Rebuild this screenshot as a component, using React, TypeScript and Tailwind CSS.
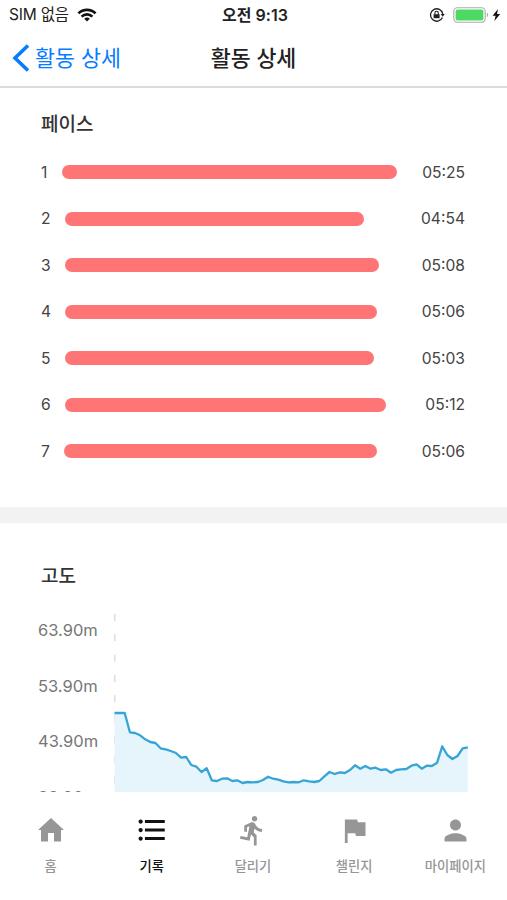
import { type FC, type ReactNode } from "react";
import { MdDirectionsRun, MdFormatListBulleted, MdPerson } from "react-icons/md";

interface Pace {
  km: number;
  time: string;
  gap: number;
  width: number;
}

const paces: Pace[] = [
  { km: 1, time: "05:25", gap: 0, width: 334.5 },
  { km: 2, time: "04:54", gap: 3, width: 299 },
  { km: 3, time: "05:08", gap: 3, width: 314 },
  { km: 4, time: "05:06", gap: 3, width: 312 },
  { km: 5, time: "05:03", gap: 3, width: 309 },
  { km: 6, time: "05:12", gap: 3, width: 320.5 },
  { km: 7, time: "05:06", gap: 2, width: 313 },
];

const labels = ["63.90m", "53.90m", "43.90m", "33.90m"];

const heights = [
  99, 99, 99, 118.3, 119, 121.3, 125.3, 128, 129, 134.3, 135.3, 137, 139, 143.7, 143, 151, 152.7, 158, 154.3, 166.3,
  167, 164.7, 164.3, 167, 166.3, 169, 168, 168.3, 168, 166, 162.7, 164.7, 165.7, 167.3, 168.3, 168, 168.3, 166.3,
  167.3, 168, 167, 162.3, 158, 160, 158.3, 159, 156, 151.3, 154.7, 152, 154.7, 153.7, 156, 155.3, 158.7, 156, 155.3,
  155, 151.7, 150.3, 154.7, 151.7, 152, 148.7, 132.3, 141, 145, 142, 134.3, 133.3,
];

const line = heights.map((y, i) => `${(0.5 + i * 5.12).toFixed(1)},${y}`).join(" ");

const StatusBar: FC = () => (
  <div className="grid h-[30px] grid-cols-3 items-center pl-[9px] pr-[6px] text-[#222]">
    <div className="flex items-center gap-2">
      <span className="whitespace-nowrap text-[15.5px] tracking-[-0.2px]">SIM 없음</span>
      <svg width="20" height="14" viewBox="0 0 20 14" fill="none" stroke="#111" strokeWidth="2.6">
        <path d="M1.4 5.4a12.2 12.2 0 0 1 17.2 0" />
        <path d="M4.6 8.6a7.6 7.6 0 0 1 10.8 0" />
        <path d="M10 13.6 7.2 10.8a4 4 0 0 1 5.6 0z" fill="#111" stroke="none" />
      </svg>
    </div>
    <span className="text-center text-[16px] font-semibold">오전 9:13</span>
    <div className="flex items-center justify-end">
      <svg width="16" height="16" viewBox="0 0 16 16" fill="none" stroke="#222">
        <path d="M13.4 10.4A6.2 6.2 0 1 1 13.8 7" strokeWidth="1.3" />
        <path d="M11.6 7h4.2l-2.1 2.8z" fill="#222" stroke="none" />
        <path d="M4.6 7.2h6v4h-6z" fill="#222" stroke="none" />
        <path d="M5.9 7.5V6a1.7 1.7 0 0 1 3.4 0v1.5" strokeWidth="1.1" />
      </svg>
      <svg className="ml-[8px]" width="38" height="16" viewBox="0 0 38 16">
        <rect x="0.8" y="0.8" width="31.4" height="14.4" rx="3.6" fill="#fff" stroke="#aaa" strokeWidth="1.1" />
        <rect x="2.6" y="2.6" width="27.8" height="10.8" rx="2" fill="#4cd964" />
        <path d="M33.8 5.8c1.8.5 1.8 3.9 0 4.4z" fill="#aaa" />
      </svg>
      <svg className="ml-px" width="9" height="12" viewBox="0 0 9 12" fill="#111">
        <path d="M6 0 .6 6.8h3L2.4 12l5.8-7H5z" />
      </svg>
    </div>
  </div>
);

const Header: FC = () => (
  <header className="grid h-[58px] grid-cols-[1fr_auto_1fr] items-center border-b-2 border-[#dcdcdc] text-[21.7px]">
    <button className="flex items-center pl-3 text-[#087cff]">
      <svg width="18" height="28" viewBox="0 0 18 28" fill="none" stroke="currentColor" strokeWidth="3.6">
        <path d="M16 1.5 3 14l13 12.5" />
      </svg>
      <span className="ml-[5px] whitespace-nowrap">활동 상세</span>
    </button>
    <h1 className="font-medium text-[#222]">활동 상세</h1>
  </header>
);

const PaceRow: FC<{ pace: Pace }> = ({ pace }) => (
  <li className="flex h-[46.5px] items-center text-[15.6px] text-[#444]">
    <span className="w-[21px]">{pace.km}</span>
    <div className="h-[14px] rounded-full bg-[#ff7474]" style={{ marginLeft: pace.gap, width: pace.width }} />
    <span className="ml-auto">{pace.time}</span>
  </li>
);

const Altitude: FC = () => (
  <div className="flex h-[178px] overflow-hidden">
    <div className="flex w-[114px] shrink-0 flex-col pl-[38px] text-[16.5px] text-[#777]">
      {labels.map((label) => (
        <span key={label} className="h-[55.6px] shrink-0 leading-[33px]">
          {label}
        </span>
      ))}
    </div>
    <svg className="shrink-0" width="356" height="178" viewBox="0 0 356 178">
      <path d="M.5 0v178" stroke="#ddd" strokeWidth="2" strokeDasharray="7 13.3" />
      <polygon points={`0.5,178 ${line} 353.8,178`} fill="#e6f5fb" />
      <polyline points={line} fill="none" stroke="#36a5d5" strokeWidth="2.3" strokeLinejoin="round" />
    </svg>
  </div>
);

interface TabProps {
  label: string;
  active?: boolean;
  children: ReactNode;
}

const Tab: FC<TabProps> = ({ label, active, children }) => (
  <button className={`flex flex-col items-center ${active ? "text-[#111]" : "text-[#969696]"}`}>
    <span className="flex h-[34px] items-center">{children}</span>
    <span className="mt-[10px] whitespace-nowrap text-[13.3px] font-medium leading-[18px]">{label}</span>
  </button>
);

export default function App() {
  return (
    <div className="flex h-[900px] w-[507px] flex-col overflow-hidden bg-white font-['Inter','Noto_Sans_CJK_KR',sans-serif]">
      <StatusBar />
      <Header />

      <section className="h-[419px] shrink-0 pl-[41px] pr-[42px] pt-[23px]">
        <h2 className="text-[19px] font-medium leading-7 text-[#333]">페이스</h2>
        <ul className="mt-[10px]">
          {paces.map((pace) => (
            <PaceRow key={pace.km} pace={pace} />
          ))}
        </ul>
      </section>

      <div className="h-[16px] shrink-0 bg-[#f2f2f2]" />

      <section className="shrink-0 pt-[40px]">
        <h2 className="mb-[23px] pl-[41px] text-[19px] font-medium leading-7 text-[#333]">고도</h2>
        <Altitude />
      </section>

      <nav className="grid w-[506px] grow grid-cols-5 items-start pt-[21px]">
        <Tab label="홈">
          <svg width="26" height="24" viewBox="0 0 26 24" fill="currentColor">
            <path d="M13 0 26 12h-3v11.5h-7V15h-6v8.5H3V12H0z" />
          </svg>
        </Tab>
        <Tab label="기록" active>
          <MdFormatListBulleted size={34} />
        </Tab>
        <Tab label="달리기">
          <MdDirectionsRun size={33} />
        </Tab>
        <Tab label="챌린지">
          <svg width="33" height="33" viewBox="0 0 24 24" fill="currentColor">
            <path d="M14.4 6 14 4H5v17h2v-7h5.6l.4 2h7V6z" />
          </svg>
        </Tab>
        <Tab label="마이페이지">
          <MdPerson size={33} />
        </Tab>
      </nav>
    </div>
  );
}
